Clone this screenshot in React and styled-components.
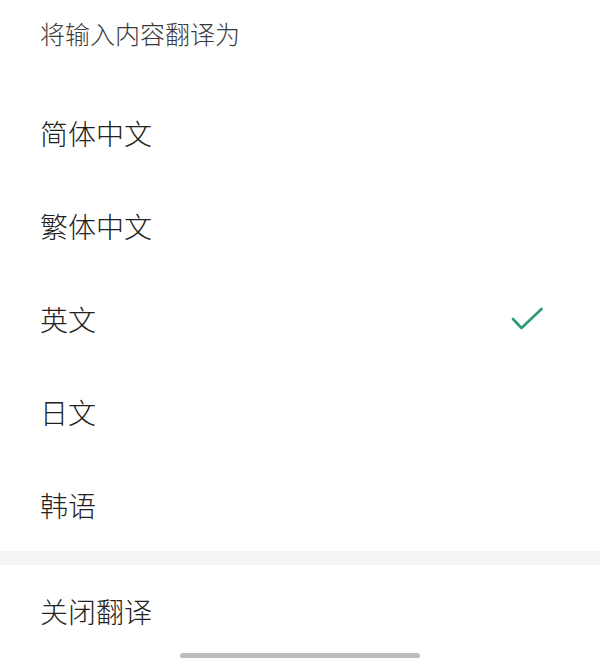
import React from "react";
import styled, { createGlobalStyle } from "styled-components";

const Global = createGlobalStyle`
  html, body { margin: 0; padding: 0; background: #ffffff; }
  body { font-family: "Noto Sans CJK SC", "Noto Sans", sans-serif; }
`;

const Sheet = styled.div`
  width: 600px;
  height: 658px;
  background: #ffffff;
  display: flex;
  flex-direction: column;
  overflow: hidden;
`;

const Header = styled.div`
  height: 87px;
  padding: 17px 40px 0;
  box-sizing: border-box;
  font-size: 25px;
  font-weight: 300;
  line-height: 32px;
  color: #3a3a3a;
`;

const Row = styled.div`
  height: 93px;
  padding: 0 56px 0 40px;
  box-sizing: border-box;
  display: flex;
  align-items: center;
  justify-content: space-between;
  font-size: 28px;
  font-weight: 300;
  color: #222222;
`;

const Band = styled.div`
  height: 14px;
  background: #f4f4f4;
`;

const CloseRow = styled.div`
  height: 88px;
  padding: 30px 40px 0;
  box-sizing: border-box;
  font-size: 28px;
  font-weight: 300;
  line-height: 32px;
  color: #222222;
`;

const Indicator = styled.div`
  width: 240px;
  height: 5px;
  border-radius: 3px;
  background: #bdbdbd;
  align-self: center;
`;

const Check = () => (
  <svg width="34" height="24" viewBox="0 0 34 24" fill="none">
    <path
      d="M3 12 L11.5 21 L31.5 2"
      stroke="#2f9a72"
      strokeWidth="2.6"
      strokeLinecap="round"
      strokeLinejoin="round"
    />
  </svg>
);

const languages = [
  { name: "简体中文" },
  { name: "繁体中文" },
  { name: "英文", selected: true },
  { name: "日文" },
  { name: "韩语" },
];

export default function App() {
  return (
    <>
      <Global />
      <Sheet>
        <Header>将输入内容翻译为</Header>
        {languages.map((l) => (
          <Row key={l.name}>
            <span>{l.name}</span>
            {l.selected && <Check />}
          </Row>
        ))}
        <Band />
        <CloseRow>关闭翻译</CloseRow>
        <Indicator />
      </Sheet>
    </>
  );
}
